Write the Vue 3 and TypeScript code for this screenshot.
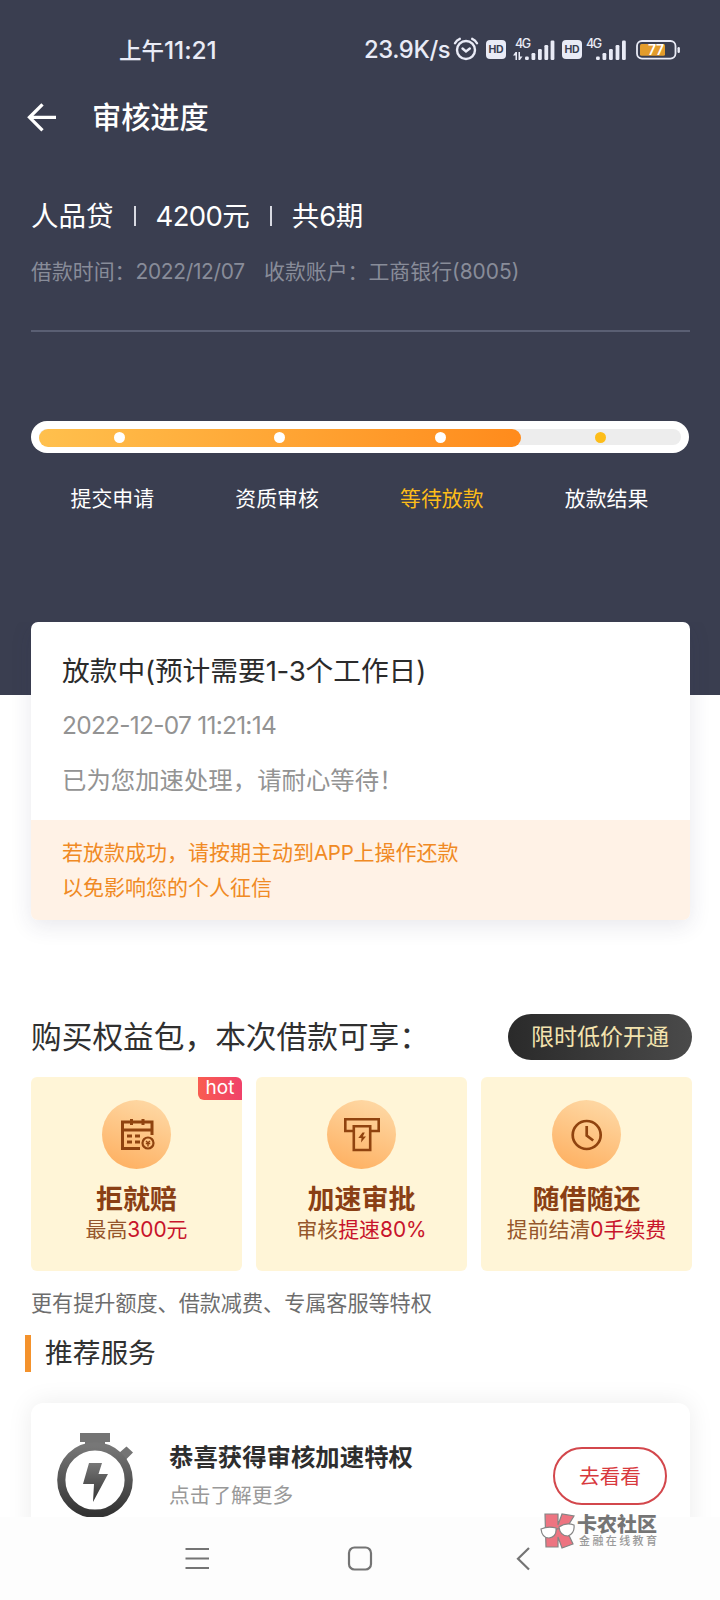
<script setup lang="ts">
interface Step { label: string; state: 'done' | 'current' | 'todo' }
interface Perk { icon: 'calendar' | 'atm' | 'clock'; title: string; lead: string; num: string; tail: string; pre: string; hot?: boolean }

const steps: Step[] = [
  { label: '提交申请', state: 'done' },
  { label: '资质审核', state: 'done' },
  { label: '等待放款', state: 'current' },
  { label: '放款结果', state: 'todo' },
]

const perks: Perk[] = [
  { icon: 'calendar', title: '拒就赔', lead: '最高', pre: '', num: '300', tail: '元', hot: true },
  { icon: 'atm', title: '加速审批', lead: '审核', pre: '提速', num: '80%', tail: '' },
  { icon: 'clock', title: '随借随还', lead: '提前结清', pre: '', num: '0', tail: '手续费' },
]
</script>

<template>
  <div class="screen">
    <header class="hero">
      <div class="status">
        <div class="clock">上午<span class="n">11:21</span></div>
        <div class="indicators">
          <span class="speed n">23.9K/s</span>
          <svg class="alarm" width="26" height="24" viewBox="0 0 26 24" fill="none" stroke="#e9ebf6" stroke-width="2.4" stroke-linecap="round">
            <circle cx="13" cy="13" r="9" />
            <path d="M9.500 11.500l3.500 3 3.800-3M2 6.200Q3.600 3 6.800 1.800M24 6.200Q22.400 3 19.200 1.800" />
          </svg>
          <svg class="hd" width="20" height="19" viewBox="0 0 20 19">
            <rect width="20" height="19" rx="4" fill="#e9ebf6" />
            <text x="10" y="13.200" text-anchor="middle" textLength="15" class="hd-text">HD</text>
          </svg>
          <svg class="sig sig-a" width="42" height="24" viewBox="0 0 42 24" fill="#e9ebf6">
            <text x="2" y="10" textLength="16" class="gen">4G</text>
            <path d="M0 17.500L2.500 14h1.500v8H2.500v-4.500zM9.500 18.500L7 22H5.500v-8H7v4.500z" />
            <rect x="12" y="18.500" width="3.800" height="3.500" rx="1.200" /><rect x="18.500" y="15" width="3.800" height="7" rx="1.200" /><rect x="25" y="11" width="3.800" height="11" rx="1.200" /><rect x="31.400" y="7" width="3.800" height="15" rx="1.200" /><rect x="37.600" y="2.500" width="3.800" height="19.500" rx="1.200" />
          </svg>
          <svg class="hd" width="20" height="19" viewBox="0 0 20 19">
            <rect width="20" height="19" rx="4" fill="#e9ebf6" />
            <text x="10" y="13.200" text-anchor="middle" textLength="15" class="hd-text">HD</text>
          </svg>
          <svg class="sig sig-b" width="41" height="24" viewBox="0 0 41 24" fill="#e9ebf6">
            <text x="0" y="10" textLength="16" class="gen">4G</text>
            <rect x="10" y="18.500" width="3.800" height="3.500" rx="1.200" /><rect x="16.500" y="15" width="3.800" height="7" rx="1.200" /><rect x="23" y="11" width="3.800" height="11" rx="1.200" /><rect x="29.600" y="7" width="3.800" height="15" rx="1.200" /><rect x="36" y="2.500" width="3.800" height="19.500" rx="1.200" />
          </svg>
          <svg class="battery" width="45" height="20" viewBox="0 0 45 20">
            <rect x="1" y="1" width="38.500" height="17.600" rx="5" fill="none" stroke="#e9ebf6" stroke-width="1.800" />
            <rect x="4" y="4" width="25" height="11.800" rx="1.500" fill="#e39c2c" />
            <rect x="41.500" y="7" width="2.400" height="6" rx="1.200" fill="#e9ebf6" />
            <text x="20" y="15" text-anchor="middle" textLength="16" class="bat-text">77</text>
          </svg>
        </div>
      </div>

      <div class="topbar">
        <svg width="30" height="30" viewBox="0 0 30 30" fill="none" stroke="#fff" stroke-width="3.300"><path d="M29 15.300H3M15.500 2.300L2.500 15.300l13 13" /></svg>
        <h1>审核进度</h1>
      </div>

      <div class="summary">
        <span class="s1">人品贷</span><i></i><span class="s2"><span class="n">4200</span>元</span><i></i><span>共<span class="n">6</span>期</span>
      </div>
      <div class="meta"><span class="m1">借款时间：<span class="n">2022/12/07</span></span><span>收款账户：工商银行<span class="n">(8005)</span></span></div>
      <div class="rule"></div>

      <div class="bar">
        <div class="track">
          <div class="fill"></div>
          <div class="dots"><span v-for="s in steps" :key="s.label"><b :class="s.state"></b></span></div>
        </div>
      </div>
      <div class="labels"><span v-for="s in steps" :key="s.label" :class="s.state">{{ s.label }}</span></div>
    </header>

    <main>
      <section class="notice">
        <div class="notice-body">
          <h2>放款中<span class="n">(</span>预计需要<span class="n">1-3</span>个工作日<span class="n">)</span></h2>
          <p class="date n">2022-12-07 11:21:14</p>
          <p class="wait">已为您加速处理，请耐心等待！</p>
        </div>
        <div class="warn">若放款成功，请按期主动到<span class="n">APP</span>上操作还款<br>以免影响您的个人征信</div>
      </section>

      <div class="perk-head">
        <h2>购买权益包，本次借款可享：</h2>
        <span class="pill">限时低价开通</span>
      </div>
      <div class="perks">
        <div v-for="p in perks" :key="p.title" class="perk">
          <span v-if="p.hot" class="hot">hot</span>
          <div class="disc">
            <svg v-if="p.icon === 'calendar'" width="36" height="36" viewBox="0 0 36 36" fill="none" stroke="#90430f" stroke-width="3">
              <path d="M21 31.500H3.500V5H33V18M3.500 13H33" />
              <path d="M12.500 2v6M24 2v6" />
              <path d="M8 19h5M16 19h5M8 25h5M16 25h5" stroke-width="3.200" />
              <circle cx="29" cy="26" r="5.500" stroke-width="2.200" />
              <path d="M27 24l2 1.700 2-1.700M26.800 26.500h4.400M29 25.700v3.800" stroke-width="1.400" />
            </svg>
            <svg v-else-if="p.icon === 'atm'" width="36" height="36" viewBox="0 0 36 36" fill="none" stroke="#90430f" stroke-width="2.600">
              <path d="M9 14H1.300V2.300H34.700V14H27" /><path d="M9.800 9.200H26.200V33H9.800Z" />
              <path d="M18.500 15.500L14.300 21h3.200l-.5 4.500L22 19.500h-3.200l2-4z" fill="#90430f" stroke="none" />
            </svg>
            <svg v-else width="36" height="36" viewBox="0 0 36 36" fill="none" stroke="#90430f" stroke-width="2.700"><circle cx="17.700" cy="18" r="14" /><path d="M17.700 9v9.500l6.500 5" /></svg>
          </div>
          <h3>{{ p.title }}</h3>
          <p>{{ p.lead }}<em>{{ p.pre }}<span class="n">{{ p.num }}</span>{{ p.tail }}</em></p>
        </div>
      </div>
      <p class="more">更有提升额度、借款减费、专属客服等特权</p>
      <h2 class="rec">推荐服务</h2>

      <section class="service">
        <svg class="watch" width="78" height="86" viewBox="0 0 78 86">
          <defs><linearGradient id="steel" x1="0" y1="0" x2="0" y2="1"><stop offset="0" stop-color="#777" /><stop offset="1" stop-color="#333" /></linearGradient></defs>
          <path fill="#747474" d="M23 0H53V9H48V13H28V9H23ZM62 20L69.500 13.500L76 19.500L68.500 27Z" />
          <circle cx="38" cy="47" r="33.700" fill="none" stroke="url(#steel)" stroke-width="8.200" />
          <path fill="url(#steel)" d="M32 30H45L41.500 41H51L36 69L37 51H26Z" />
        </svg>
        <div class="service-text">
          <h3>恭喜获得审核加速特权</h3>
          <p>点击了解更多</p>
        </div>
        <button type="button">去看看</button>
      </section>
    </main>

    <nav>
      <svg width="26" height="26" viewBox="0 0 26 26" fill="none" stroke="#747474" stroke-width="2.200"><path d="M1.500 3H25M1.500 12.500H25M1.500 22H25" /></svg>
      <svg width="26" height="26" viewBox="0 0 26 26" fill="none" stroke="#747474" stroke-width="2.200"><rect x="2" y="1.500" width="22" height="22" rx="5.500" /></svg>
      <svg width="26" height="26" viewBox="0 0 26 26" fill="none" stroke="#747474" stroke-width="2.200"><path d="M19 2L8 12.700L19 23.500" /></svg>
    </nav>

    <div class="mark">
      <svg width="36" height="36" viewBox="0 0 36 36" stroke="#858585" stroke-width="1.200">
        <path fill="#ed7481" d="M5 1H18V12L22 1L34 3L26 16L33 31L22 35L18 24V34H6Z" />
        <path fill="#fff" d="M1 16Q8 13 16 15Q17 24 9 25Q2 25 1 16ZM19 14Q26 9 34 12Q35 20 28 23Q20 23 19 14Z" />
        <path fill="none" d="M16 17Q17.500 15 19 16" />
      </svg>
      <div><strong>卡农社区</strong><small>金融在线教育</small></div>
    </div>
  </div>
</template>

<style>
body { margin: 0; background: #fff; }
</style>

<style scoped>
* { box-sizing: border-box; }
h1, h2, h3, p { margin: 0; font-weight: 400; }
.screen { position: relative; width: 720px; height: 1600px; overflow: hidden; display: flex; flex-direction: column; background: #fff; color: #303030; font-family: "Noto Sans CJK SC", sans-serif; }
.n { font-family: Inter, "Noto Sans CJK SC", sans-serif; line-height: 0; }

.hero { flex: none; height: 695px; background: #3a3e50; color: #fff; display: flex; flex-direction: column; }
.status { height: 84px; padding: 33px 0 0 119px; display: flex; color: #e9ebf6; }
.clock { width: 245px; font-size: 22.500px; line-height: 32px; font-weight: 500; }
.clock .n { font-size: 24.500px; letter-spacing: -.1px; }
.indicators { display: flex; align-items: flex-start; height: 34px; }
.speed { width: 89px; font-size: 23.800px; line-height: 34px; font-weight: 500; letter-spacing: -.4px; white-space: nowrap; }
.alarm { margin-top: 4px; }
.hd { margin: 7px 0 0 7px; }
.sig { margin-top: 5px; }
.sig-a { margin-left: 7px; }
.sig-b { margin-left: 4px; }
.battery { margin: 7px 0 0 9px; }
.hd-text { font: 700 10.500px Inter, sans-serif; fill: #3a3e50; }
.gen { font: 500 12.500px Inter, sans-serif; }
.bat-text { font: 600 14px Inter, sans-serif; fill: #fff; }

.topbar { height: 66px; padding-left: 27px; display: flex; align-items: center; gap: 35px; }
.topbar h1 { font-size: 29.200px; line-height: 40px; font-weight: 500; margin-top: -5px; }

.summary { margin-top: 44px; height: 40px; padding-left: 31px; display: flex; align-items: center; font-size: 27.500px; line-height: 40px; }
.summary .n { letter-spacing: -.6px; }
.summary i { width: 2px; height: 20px; background: #d8dae2; margin: 4px 20px 0; }
.meta { margin-top: 21px; height: 30px; padding-left: 31px; display: flex; font-size: 20.900px; line-height: 30px; color: #888c99; }
.m1 { width: 233px; }
.m1 .n { letter-spacing: -.3px; }
.rule { margin: 45px 30px 0 31px; height: 2px; background: #5a5f73; }

.bar { margin: 89px 31px 0 31px; height: 32px; padding: 8px; border-radius: 16px; background: #fff; }
.track { position: relative; height: 16px; border-radius: 8px; background: #ededed; }
.fill { width: 75%; height: 18px; border-radius: 9px; background: linear-gradient(90deg, #ffc04d, #ff8b1c); }
.dots { position: absolute; inset: 0; display: flex; }
.dots span { flex: 1; display: flex; align-items: center; justify-content: center; }
.dots b { width: 11px; height: 11px; border-radius: 50%; background: #fff; }
.dots b.todo { background: #fdbd19; }
.labels { margin: 28px 31px 0 30px; display: flex; font-size: 20.900px; line-height: 32px; }
.labels span { flex: 1; text-align: center; }
.labels .current { color: #fdbd19; }

main { flex: none; height: 895px; overflow: hidden; margin-top: -73px; position: relative; }
.notice { margin: 0 30px 0 31px; height: 298px; border-radius: 7px; background: #fff; box-shadow: 0 6px 22px rgba(50, 50, 90, .11); overflow: hidden; }
.notice-body { height: 198px; padding: 26px 31px 0; }
.notice h2 { font-size: 27.700px; line-height: 42px; color: #2b2b2b; }
.notice h2 .n { letter-spacing: -.3px; }
.notice .date { margin-top: 15px; font-size: 24.500px; line-height: 40px; letter-spacing: -.75px; color: #939393; }
.wait { margin-top: 13px; font-size: 24.400px; line-height: 42px; color: #939393; }
.warn { height: 100px; padding: 14px 31px 0; background: #fff2e6; color: #f08a24; font-size: 21px; line-height: 34.500px; }
.warn .n { font-size: 20.500px; letter-spacing: -.3px; }

.perk-head { margin: 93px 28px 0 31px; height: 47px; display: flex; justify-content: space-between; align-items: center; }
.perk-head h2 { font-size: 30.700px; line-height: 44px; margin-top: -3px; white-space: nowrap; }
.pill { width: 184px; height: 46px; border-radius: 24px; text-align: center; font-size: 23px; line-height: 43px; color: #f3e3ae; background: linear-gradient(90deg, #2a2a2a, #4a4a4a); }
.perks { margin: 17px 28px 0 31px; display: grid; grid-template-columns: repeat(3, 1fr); gap: 14px; }
.perk { position: relative; height: 194px; border-radius: 6px; background: #fff5d7; padding-top: 23px; text-align: center; }
.hot { position: absolute; top: 0; right: 0; width: 44px; height: 23px; border-radius: 0 6px 0 6px; background: linear-gradient(90deg, #f95d50, #f0416a); color: #fff; font: 400 19px/22px Inter, sans-serif; }
.disc { width: 69px; height: 69px; margin: 0 auto; border-radius: 50%; display: flex; align-items: center; justify-content: center; background: linear-gradient(200deg, #fedcab, #fead5c); }
.perk h3 { margin-top: 11px; font-size: 27px; line-height: 36px; font-weight: 600; color: #8a3f14; }
.perk p { margin-top: -3px; font-size: 20.900px; line-height: 30px; color: #95562b; white-space: nowrap; }
.perk em { font-style: normal; color: #c8142b; }
.more { margin: 16px 0 0 31px; font-size: 21.100px; line-height: 30px; color: #6d6d6d; }
.rec { margin: 18px 0 0 25px; height: 37px; border-left: 6px solid #f4922c; padding-left: 14px; font-size: 27.700px; line-height: 33px; }
.service { margin: 31px 30px 0 31px; height: 140px; border-radius: 12px; background: #fff; box-shadow: 0 0 26px rgba(0, 0, 0, .08); display: flex; align-items: flex-start; }
.watch { margin: 30px 0 0 26px; flex: none; }
.service-text { margin-left: 34px; padding-top: 34px; flex: 1; }
.service-text h3 { font-size: 24.400px; line-height: 38px; font-weight: 600; color: #2e2e2e; }
.service-text p { margin-top: 3px; font-size: 20.700px; line-height: 32px; color: #999; }
.service button { margin: 44px 23px 0 0; width: 114px; height: 58px; border: 2px solid #d3474c; border-radius: 29px; background: #fff; padding: 0 0 3px; color: #d8393d; font: 400 20.700px/50px "Noto Sans CJK SC", sans-serif; }

nav { height: 83px; padding: 29px 184px 0; display: flex; justify-content: space-between; background: #fdfdfd; }
.mark { position: absolute; left: 540px; top: 1513px; display: flex; gap: 1px; color: #757575; }
.mark div { display: flex; flex-direction: column; }
.mark strong { font-size: 20px; line-height: 22px; font-weight: 900; }
.mark small { margin: -1px 0 0 2px; font-size: 11px; line-height: 13px; letter-spacing: 2.400px; font-weight: 500; color: #999; }
</style>
